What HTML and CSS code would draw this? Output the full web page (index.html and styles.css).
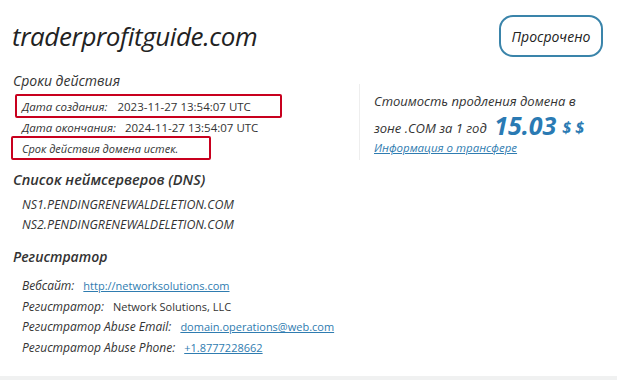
FILE: index.html
```html
<!DOCTYPE html>
<html lang="ru">
<head>
<meta charset="utf-8">
<title>traderprofitguide.com</title>
<link rel="stylesheet" href="styles.css">
</head>
<body>
<div class="page">
  <header class="header">
    <h1 class="title">traderprofitguide.com</h1>
    <div class="badge">Просрочено</div>
  </header>
  <div class="main">
    <div class="left">
      <h2 class="section-title">Сроки действия</h2>
      <div class="row mark mark-1"><span class="lbl">Дата создания:</span><span class="val">2023-11-27 13:54:07 UTC</span></div>
      <div class="row plain"><span class="lbl">Дата окончания:</span><span class="val">2024-11-27 13:54:07 UTC</span></div>
      <div class="row mark mark-2"><span class="lbl">Срок действия домена истек.</span></div>

      <h2 class="section-title dns-title">Список неймсерверов (DNS)</h2>
      <div class="ns">NS1.PENDINGRENEWALDELETION.COM</div>
      <div class="ns">NS2.PENDINGRENEWALDELETION.COM</div>

      <h2 class="section-title reg-title">Регистратор</h2>
      <div class="reg"><span class="lbl">Вебсайт:</span><a class="link" href="#">http://networksolutions.com</a></div>
      <div class="reg"><span class="lbl">Регистратор:</span><span class="val">Network Solutions, LLC</span></div>
      <div class="reg"><span class="lbl">Регистратор Abuse Email:</span><a class="link" href="#">domain.operations@web.com</a></div>
      <div class="reg"><span class="lbl">Регистратор Abuse Phone:</span><a class="link" href="#">+1.8777228662</a></div>
    </div>
    <aside class="right">
      <p class="price">Стоимость продления домена в зоне .COM за 1 год <span class="amount">15.03</span><span class="cur">$ $</span></p>
      <a class="transfer" href="#">Информация о трансфере</a>
    </aside>
  </div>
</div>
<div class="footer"></div>
</body>
</html>
```
FILE: styles.css
```css
html, body {
  margin: 0;
  padding: 0;
}
body {
  width: 617px;
  height: 380px;
  display: flex;
  flex-direction: column;
  background: #fff;
  color: #222;
  font-family: "Open Sans", "Noto Sans", sans-serif;
  overflow: hidden;
}
.page {
  flex: 1;
  padding: 14px 14px 0 12px;
}
.header {
  display: flex;
  justify-content: space-between;
  align-items: center;
  height: 44px;
}
.title {
  margin: 0;
  font-size: 26px;
  font-style: italic;
  font-weight: 500;
  color: #222;
  letter-spacing: -0.4px;
}
.badge {
  width: 100px;
  height: 38px;
  border: 2px solid #3a84aa;
  border-radius: 14px;
  display: flex;
  align-items: center;
  justify-content: center;
  font-size: 14px;
  font-style: italic;
  color: #222;
}
.main {
  display: flex;
}
.left {
  width: 347px;
}
.section-title {
  margin: 13px 0 4px 1px;
  font-size: 14px;
  font-style: italic;
  font-weight: 500;
  color: #333;
}
.row {
  display: flex;
  align-items: center;
  font-size: 11.5px;
  height: 20px;
}
.lbl {
  font-style: italic;
  color: #333;
}
.val {
  color: #333;
}
.row .val {
  margin-left: 10px;
}
.mark {
  border: 2px solid #c8001e;
  border-radius: 2px;
  box-sizing: border-box;
  height: 24px;
}
.mark-1 {
  width: 267px;
  margin-left: 3px;
  padding-left: 5px;
}
.plain {
  padding-left: 10px;
  height: 18px;
}
.plain .val {
  margin-left: 9px;
}
.mark-2 {
  width: 200px;
  margin-left: -1px;
  padding-left: 9px;
  font-size: 11px;
}
.dns-title {
  margin-top: 10px;
  margin-bottom: 6px;
  font-weight: 600;
  font-size: 14.5px;
}
.ns {
  font-size: 12.4px;
  font-style: italic;
  color: #333;
  padding-left: 10px;
  line-height: 20px;
}
.reg-title {
  margin-top: 12px;
  margin-bottom: 10px;
  font-weight: 600;
}
.reg {
  font-size: 12px;
  padding-left: 10px;
  line-height: 20.7px;
}
.reg .lbl {
  margin-right: 9px;
}
.reg .val, .reg .link {
  font-size: 11px;
}
.link {
  color: #2f7cb0;
  text-decoration: underline;
}
.right {
  margin-top: 26px;
  height: 76px;
  border-left: 1px solid #eeeeee;
  padding-left: 14px;
}
.price {
  margin: 5px 0 0;
  width: 228px;
  font-size: 13px;
  font-style: italic;
  line-height: 24px;
  color: #333;
}
.amount {
  font-size: 25px;
  font-weight: 700;
  color: #2a7ab3;
  font-style: italic;
  vertical-align: -2px;
  margin-left: 4px;
}
.cur {
  font-size: 16px;
  font-weight: 700;
  color: #2a7ab3;
  margin-left: 6px;
}
.transfer {
  display: block;
  font-size: 11.5px;
  font-style: italic;
  color: #2f7cb0;
  text-decoration: underline;
}
.footer {
  height: 4px;
  background: #f0f1f1;
}
```
